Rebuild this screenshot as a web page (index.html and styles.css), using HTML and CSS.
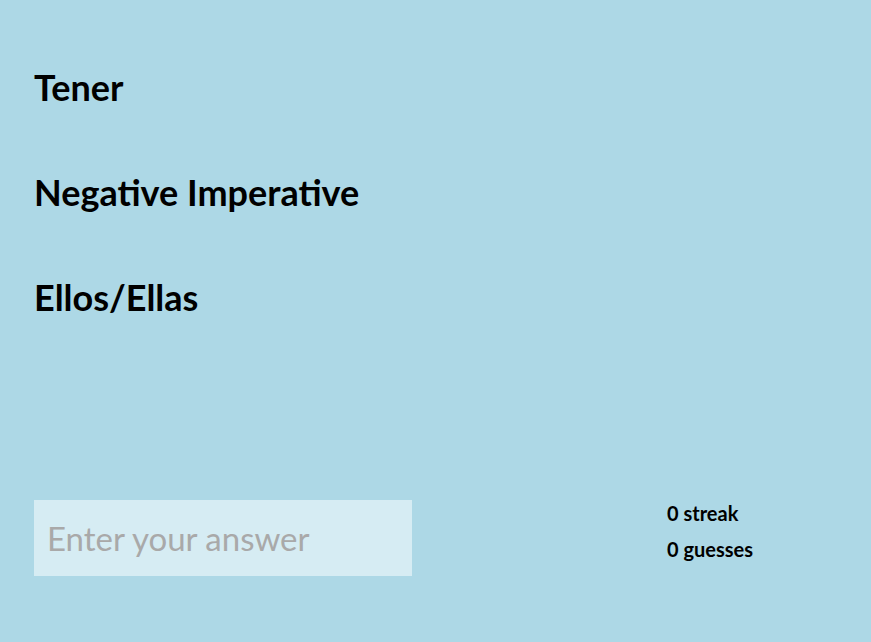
FILE: index.html
```html
<!DOCTYPE html>
<html>
<head>
<meta charset="utf-8">
<link rel="stylesheet" href="styles.css">
</head>
<body>
<main class="page">
  <section class="prompts">
    <h1 class="prompt">Tener</h1>
    <h1 class="prompt">Negative Imperative</h1>
    <h1 class="prompt">Ellos/Ellas</h1>
  </section>
  <section class="answer-row">
    <input class="answer" type="text" placeholder="Enter your answer">
    <div class="stats">
      <div class="stat">0 streak</div>
      <div class="stat">0 guesses</div>
    </div>
  </section>
</main>
</body>
</html>
```
FILE: styles.css
```css
html, body {
  margin: 0;
  padding: 0;
  background: #add8e6;
}
body {
  font-family: "Lato", "Noto Sans", sans-serif;
  color: #000;
}
.page {
  box-sizing: border-box;
  min-height: 642px;
  padding: 65px 34px 66px;
  display: flex;
  flex-direction: column;
  justify-content: space-between;
}
.prompts {
  display: flex;
  flex-direction: column;
  gap: 61px;
}
.prompt {
  margin: 0;
  font-size: 36px;
  line-height: 44px;
  font-weight: 700;
}
.answer-row {
  display: flex;
  align-items: flex-start;
  gap: 255px;
}
.answer {
  box-sizing: border-box;
  width: 378px;
  height: 76px;
  border: none;
  outline: none;
  margin: 0;
  padding: 0 13px;
  background: rgba(255, 255, 255, 0.5);
  font-family: inherit;
  font-size: 33px;
  color: #000;
}
.answer::placeholder {
  color: #a9a9a9;
}
.stats {
  display: flex;
  flex-direction: column;
  margin-top: -5px;
}
.stat {
  font-size: 20px;
  line-height: 36px;
  font-weight: 700;
}
```
